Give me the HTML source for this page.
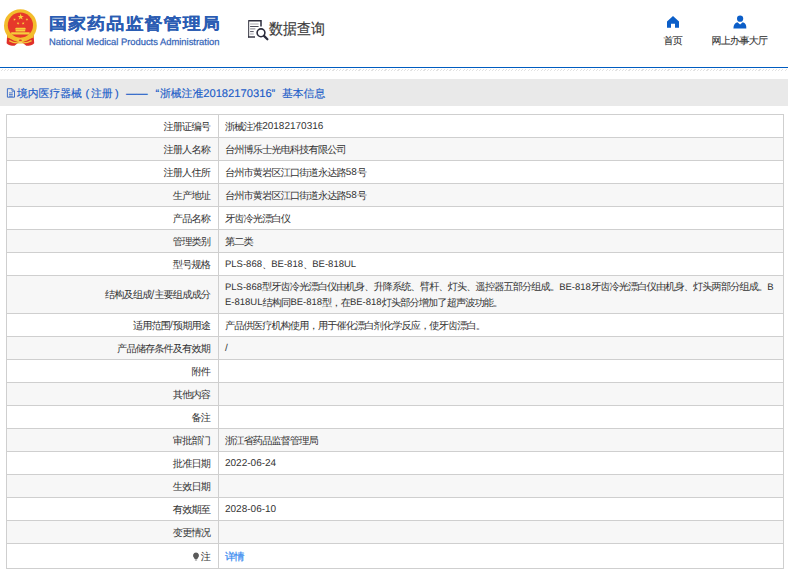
<!DOCTYPE html>
<html><head><meta charset="utf-8">
<style>
*{margin:0;padding:0;box-sizing:border-box}
html,body{width:788px;height:575px;overflow:hidden;background:#fff;font-family:"Liberation Sans",sans-serif;color:#333;text-rendering:geometricPrecision}
.hdr{position:absolute;left:0;top:0;width:788px;height:67px;background:#fff}
.emb{position:absolute;left:0;top:0}
.t1{position:absolute;left:49px;top:13px;font-size:18px;line-height:22px;color:#2a5cb3;font-weight:bold;white-space:nowrap;letter-spacing:1.1px;transform:scaleY(0.9);transform-origin:0 10.6px;-webkit-text-stroke:0.15px #2a5cb3}
.t2{position:absolute;left:49px;top:36px;font-size:9.4px;line-height:11px;color:#3565b8;white-space:nowrap;-webkit-text-stroke:0.25px #3565b8}
.dq{position:absolute;left:244px;top:16px}
.dqt{position:absolute;left:269px;top:19.5px;font-size:14px;line-height:18px;color:#3c3c3c;white-space:nowrap;transform:scaleY(1.1);transform-origin:0 9.5px;-webkit-text-stroke:0.15px #3c3c3c}
.nav{position:absolute;font-size:10px;letter-spacing:-0.7px;line-height:11px;color:#333;white-space:nowrap;-webkit-text-stroke:0.1px #333}
.line{position:absolute;left:0;top:66.7px;width:788px;height:1.5px;background:#005cc0}
.hatch{position:absolute;left:0;top:69px;width:788px;height:2px;background:repeating-linear-gradient(135deg,#fff 0,#fff 1.5px,#e2e2e2 1.5px,#e2e2e2 2.3px)}
.crumb{position:absolute;left:0;top:79px;width:788px;height:27px;background:#e9e9e9}
.crumb span{position:absolute;top:8.5px;font-size:10.8px;line-height:13px;color:#1a5cc8;white-space:nowrap;-webkit-text-stroke:0.15px #1a5cc8}
.crumb .p{font-size:11px;font-family:"Liberation Sans",sans-serif}
.crumb b{font-weight:normal;font-size:11.2px}
table{position:absolute;left:6px;top:114px;width:778px;border-collapse:collapse;border:1px solid #cfcfcf}
td{border:1px solid #cfcfcf;font-size:10.2px;letter-spacing:-0.9px;line-height:15.5px;color:#333;height:23px;padding:2.5px 6px 0;word-break:break-all}
.n{font-size:10px;letter-spacing:0;position:relative;top:-0.7px}
.m{font-size:9.5px}
td.l{width:212px;text-align:right;padding:2.5px 8px 0 4px}
tr:nth-child(even) td{background:#f7f7f7}
</style></head><body>
<div class="hdr">
  <svg class="emb" width="44" height="50" viewBox="0 0 44 50">
    <path d="M7.2 34.5 L6.6 43.2 Q9 45.8 14.5 45.8 L20.4 41 L26.3 45.8 Q31.8 45.8 34.2 43.2 L33.6 34.5z" fill="#e0302a"/>
    <circle cx="20.4" cy="25.7" r="16.4" fill="#f3bd2c"/>
    <circle cx="20.4" cy="25.2" r="12.6" fill="#e6392a"/>
    <path d="M20.70 13.60 L21.44 15.88 L23.84 15.88 L21.90 17.29 L22.64 19.57 L20.70 18.16 L18.76 19.57 L19.50 17.29 L17.56 15.88 L19.96 15.88z" fill="#f8d43c"/>
    <path d="M15.25 18.30 L15.02 19.37 L15.97 19.91 L14.88 20.03 L14.66 21.09 L14.21 20.10 L13.13 20.21 L13.94 19.48 L13.50 18.49 L14.44 19.03z" fill="#f8d43c"/>
    <path d="M26.25 18.30 L27.06 19.03 L28.00 18.49 L27.56 19.48 L28.37 20.21 L27.29 20.10 L26.84 21.09 L26.62 20.03 L25.53 19.91 L26.48 19.37z" fill="#f8d43c"/>
    <path d="M18.39 21.95 L18.45 23.04 L19.50 23.32 L18.48 23.71 L18.54 24.80 L17.85 23.95 L16.83 24.34 L17.43 23.43 L16.74 22.58 L17.79 22.87z" fill="#f8d43c"/>
    <path d="M22.81 21.95 L23.41 22.87 L24.46 22.58 L23.77 23.43 L24.37 24.34 L23.35 23.95 L22.66 24.80 L22.72 23.71 L21.70 23.32 L22.75 23.04z" fill="#f8d43c"/>
    <path d="M16 27.8 L25 27.8 L26.2 29.2 L14.8 29.2z M15.6 29.6 h9.6 v2 h-9.6z M11.2 32.2 h18.4 v2.4 h-18.4z" fill="#f6cf3c"/>
    <path d="M7.6 35 Q20.4 41 33.2 35 L33.6 37.6 Q20.4 43.4 7.2 37.6z" fill="#f3bd2c"/>
    <path d="M9.2 40.6 Q14 43.6 20.4 42.8 Q26.8 43.6 31.6 40.6" fill="none" stroke="#f4c53a" stroke-width="1.3"/>
    <ellipse cx="20.4" cy="40.2" rx="3.6" ry="1.9" fill="#f4c53a"/>
    <ellipse cx="20.4" cy="40.2" rx="1.6" ry="0.8" fill="#e0302a"/>
  </svg>
  <div class="t1">国家药品监督管理局</div>
  <div class="t2">National Medical Products Administration</div>
  <svg class="dq" width="30" height="28" viewBox="0 0 30 28">
    <path d="M4.4 4.8 H17 V10.6" fill="none" stroke="#2d2d3c" stroke-width="1.5"/>
    <path d="M4.6 4.2 V21.6" stroke="#55555f" stroke-width="1.2"/>
    <path d="M4 21 H11" stroke="#2d2d3c" stroke-width="1.4"/>
    <path d="M6.1 8h8.5" stroke="#a5a5ad" stroke-width="1"/>
    <path d="M6.1 10.5h8.5" stroke="#3a3a48" stroke-width="0.9"/>
    <path d="M6.1 12.9h5.3" stroke="#80808a" stroke-width="1"/>
    <path d="M6.1 15.6h3.6" stroke="#3a3a48" stroke-width="0.9"/>
    <path d="M6.1 18h3.6" stroke="#a5a5ad" stroke-width="1"/>
    <circle cx="17" cy="16.8" r="3.9" fill="none" stroke="#2d2d3c" stroke-width="1.6"/>
    <path d="M20 19.9 L23.4 23.3" stroke="#2d2d3c" stroke-width="2.2" stroke-linecap="round"/>
  </svg>
  <div class="dqt">数据查询</div>
  <svg style="position:absolute;left:665px;top:14px" width="16" height="16" viewBox="0 0 16 16">
    <path d="M2 7.5 L8 2 L14 7.5 V13.7 H10 V9.7 H6 V13.7 H2z" fill="#0b5ec8"/>
  </svg>
  <div class="nav" style="left:663.5px;top:35.5px">首页</div>
  <svg style="position:absolute;left:731px;top:14px" width="18" height="16" viewBox="0 0 18 16">
    <circle cx="9.1" cy="4.7" r="3.1" fill="#0b5ec8"/>
    <path d="M2.4 14.4 Q2.6 9.2 6.4 8.2 L9.1 10.6 L11.8 8.2 Q15.6 9.2 15.3 14.4z" fill="#0b5ec8"/>
  </svg>
  <div class="nav" style="left:711.5px;top:35.5px">网上办事大厅</div>
</div>
<div class="line"></div>
<div class="hatch"></div>
<div class="crumb">
<svg style="position:absolute;left:6px;top:9px" width="10" height="11" viewBox="0 0 10 11"><path d="M1.4 0.7 H6.2 L8.5 3 V9.2 H1.4z" fill="none" stroke="#2d62c4" stroke-width="0.9"/><path d="M6 0.9 V3.2 H8.4" fill="none" stroke="#2d62c4" stroke-width="0.8"/><path d="M3 4.9h3.8 M3 6.6h3.8 M3 8.2h3.8" stroke="#2d62c4" stroke-width="0.8"/></svg>
<span style="left:17px">境内医疗器械</span>
<span class="p" style="left:85.5px">(</span>
<span style="left:91px">注册</span>
<span class="p" style="left:115px">)</span>
<span style="left:126px">——</span>
<span class="p" style="left:155.5px">“</span>
<span style="left:160px">浙械注准<b>20182170316</b></span>
<span class="p" style="left:271.5px">”</span>
<span style="left:282px">基本信息</span>
</div>
<table>
<tr><td class="l">注册证编号</td><td>浙械注准<span class="n">20182170316</span></td></tr>
<tr><td class="l">注册人名称</td><td>台州博乐士光电科技有限公司</td></tr>
<tr><td class="l">注册人住所</td><td>台州市黄岩区江口街道永达路<span class="n">58</span>号</td></tr>
<tr><td class="l">生产地址</td><td>台州市黄岩区江口街道永达路<span class="n">58</span>号</td></tr>
<tr><td class="l">产品名称</td><td>牙齿冷光漂白仪</td></tr>
<tr><td class="l">管理类别</td><td>第二类</td></tr>
<tr><td class="l">型号规格</td><td><span class="n m">PLS-868</span>、<span class="n m">BE-818</span>、<span class="n m">BE-818UL</span></td></tr>
<tr style="height:38px"><td class="l">结构及组成<span class="n">/</span>主要组成成分</td><td style="white-space:nowrap"><span class="n m">PLS-868</span>型牙齿冷光漂白仪由机身、升降系统、臂杆、灯头、遥控器五部分组成。<span class="n m">BE-818</span>牙齿冷光漂白仪由机身、灯头两部分组成。<span class="n m">B</span><br><span class="n m">E-818UL</span>结构同<span class="n m">BE-818</span>型，在<span class="n m">BE-818</span>灯头部分增加了超声波功能。</td></tr>
<tr><td class="l">适用范围<span class="n">/</span>预期用途</td><td>产品供医疗机构使用，用于催化漂白剂化学反应，使牙齿漂白。</td></tr>
<tr><td class="l">产品储存条件及有效期</td><td><span class="n">/</span></td></tr>
<tr><td class="l">附件</td><td></td></tr>
<tr><td class="l">其他内容</td><td></td></tr>
<tr><td class="l">备注</td><td></td></tr>
<tr><td class="l">审批部门</td><td>浙江省药品监督管理局</td></tr>
<tr><td class="l">批准日期</td><td><span class="n">2022-06-24</span></td></tr>
<tr><td class="l">生效日期</td><td></td></tr>
<tr><td class="l">有效期至</td><td><span class="n">2028-06-10</span></td></tr>
<tr><td class="l">变更情况</td><td></td></tr>
<tr style="height:25px"><td class="l" style="padding-top:3px"><svg width="8" height="9" viewBox="0 0 8 9" style="vertical-align:-1px;margin-right:1px"><path d="M4 0.6 A3 3 0 0 1 5.9 5.9 L5.3 7 H2.7 L2.1 5.9 A3 3 0 0 1 4 0.6z" fill="#5a5a5a"/><rect x="2.9" y="7.4" width="2.2" height="1.1" fill="#888"/></svg>注</td><td style="color:#3b8cf0;padding-top:3px;-webkit-text-stroke:0.25px #3b8cf0">详情</td></tr>
</table>
</body></html>
